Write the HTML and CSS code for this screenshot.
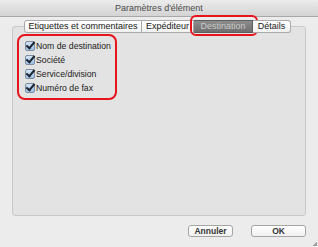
FILE: index.html
```html
<!DOCTYPE html>
<html lang="fr">
<head>
  <meta charset="UTF-8" />
  <title>Paramètres d'élément</title>
  <link rel="stylesheet" href="styles.css">
</head>
<body>
  <div class="window">
    <div class="titlebar">Paramètres d'élément</div>

    <div class="content">
      <div class="tabs">
        <div class="tab tab-labels">Etiquettes et commentaires</div>
        <div class="tab tab-sender">Expéditeur</div>
        <div class="tab tab-dest active">Destination<span class="mark mark-tab"></span></div>
        <div class="tab tab-details">Détails</div>
      </div>

      <div class="panel">
        <div class="fields">
          <label class="field"><span class="check"></span>Nom de destination</label>
          <label class="field"><span class="check"></span>Société</label>
          <label class="field"><span class="check"></span>Service/division</label>
          <label class="field"><span class="check"></span>Numéro de fax</label>
        </div>
      </div>

      <div class="actions">
        <button class="btn btn-cancel">Annuler</button>
        <button class="btn btn-ok">OK</button>
      </div>
    </div>
    <div class="grip"></div>
  </div>
</body>
</html>
```

FILE: styles.css
```css
* {
  margin: 0;
  padding: 0;
  box-sizing: border-box;
}

body {
  width: 318px;
  height: 247px;
  overflow: hidden;
  background: #ececec;
  font-family: 'Liberation Sans', Arial, sans-serif;
  font-size: 9px;
  color: #1a1a1a;
}

.window {
  position: relative;
  height: 247px;
  display: flex;
  flex-direction: column;
}

/* Barre de titre */
.titlebar {
  height: 17px;
  line-height: 16px;
  text-align: center;
  color: #4a4a4a;
  font-size: 9px;
  background: linear-gradient(#ebebeb, #d3d3d3);
  border-bottom: 1px solid #a8a8a8;
}

.content {
  padding: 3px 12px 0 12px;
  display: flex;
  flex-direction: column;
}

/* Onglets */
.tabs {
  display: flex;
  margin-left: 12px;
  height: 13px;
  margin-bottom: -7px;
  position: relative;
  z-index: 1;
}

.tab {
  height: 13px;
  line-height: 11px;
  text-align: center;
  white-space: nowrap;
  background: linear-gradient(#ffffff, #f1f1f1);
  border: 1px solid #a9a9a9;
  border-left: none;
  position: relative;
}

.tab-labels {
  width: 118px;
  border-left: 1px solid #a9a9a9;
  border-radius: 3px 0 0 3px;
}

.tab-sender { width: 52px; }
.tab-dest { width: 59px; }

.tab-details {
  width: 38px;
  border-radius: 0 3px 3px 0;
}

.tab.active {
  background: linear-gradient(#8c8c8c, #6f6f6f);
  color: #c9c9c9;
  border-color: #5e5e5e;
}

/* Encadrés rouges */
.mark {
  position: absolute;
  border: 2px solid #e8141c;
  border-radius: 6px;
  pointer-events: none;
}

.mark-tab {
  left: -4px;
  right: -6px;
  top: -6px;
  bottom: -4px;
}

/* Panneau */
.panel {
  height: 190px;
  background: #e3e3e3;
  border: 1px solid #c9c9c9;
  border-radius: 3px;
  padding: 7px 0 0 4px;
}

.fields {
  width: 100px;
  border: 2px solid #e8141c;
  border-radius: 8px;
  padding: 3px 0 3px 5px;
  display: flex;
  flex-direction: column;
  font-size: 8.7px;
}

.field {
  height: 14px;
  display: flex;
  align-items: center;
  gap: 1px;
  white-space: nowrap;
}

.check {
  flex: none;
  width: 10px;
  height: 10px;
  margin-left: 1px;
  border: 1px solid #7d8ea3;
  border-radius: 2px;
  background: linear-gradient(#d4e5f6, #9cc0e6);
  position: relative;
}

.check::after {
  content: "";
  position: absolute;
  left: 2px;
  top: -2px;
  width: 3px;
  height: 7px;
  border-right: 2px solid #1d2430;
  border-bottom: 2px solid #1d2430;
  transform: rotate(40deg);
}

/* Boutons */
.actions {
  display: flex;
  justify-content: flex-end;
  gap: 18px;
  margin-top: 9px;
}

.btn {
  height: 12px;
  font-family: inherit;
  font-size: 8.5px;
  font-weight: bold;
  color: #333;
  background: linear-gradient(#ffffff, #f0f0f0);
  border: 1px solid #a5a5a5;
  border-radius: 3px;
  line-height: 10px;
}

.btn-cancel { width: 45px; }
.btn-ok { width: 55px; }

.grip {
  position: absolute;
  right: 1px;
  bottom: 1px;
  width: 4px;
  height: 4px;
  background: linear-gradient(135deg, transparent 50%, #a0a0a0 50%);
}
```
